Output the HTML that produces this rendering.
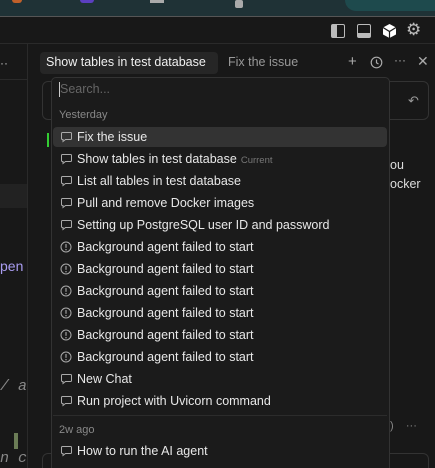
<!DOCTYPE html><html><head><style>
*{margin:0;padding:0;box-sizing:border-box}
html,body{width:435px;height:468px;overflow:hidden}
body{background:#181818;font-family:"Liberation Sans",sans-serif;position:relative;color:#ddd}
.abs{position:absolute}
.row{position:absolute;left:53px;width:334px;height:20px;font-size:12.5px;color:#e8e8e8;line-height:20px;padding-left:24px;white-space:nowrap}
.row svg{position:absolute;left:7px;top:4px}
.cur{font-size:9.5px;color:#777;margin-left:4px}
</style></head><body>
<div class="abs" style="left:0;top:0;width:435px;height:16px;background:#1f3236"></div>
<div class="abs" style="left:345px;top:0;width:90px;height:11px;background:#1e4a4d;border-radius:0 0 0 12px"></div>
<div class="abs" style="left:12px;top:0;width:10px;height:3px;background:#c0602a;border-radius:0 0 5px 5px"></div>
<div class="abs" style="left:80px;top:0;width:14px;height:3px;background:#5b3fc0;border-radius:0 0 6px 6px"></div>
<div class="abs" style="left:150px;top:0;width:14px;height:3px;background:#aaa"></div>
<div class="abs" style="left:235px;top:0;width:8px;height:8px;background:#aaa;border-radius:2px"></div>
<div class="abs" style="left:0;top:16px;width:435px;height:1px;background:#555"></div>
<div class="abs" style="left:0;top:17px;width:435px;height:27px;background:#181818;border-bottom:1px solid #2a2a2a"></div>
<svg class="abs" style="left:331px;top:24px" width="14" height="14"><rect x="0.5" y="0.5" width="13" height="13" rx="1.5" fill="none" stroke="#bbb"/><rect x="1" y="1" width="5" height="12" fill="#bbb"/></svg>
<svg class="abs" style="left:357px;top:24px" width="14" height="14"><rect x="0.5" y="0.5" width="13" height="13" rx="1.5" fill="none" stroke="#bbb"/><rect x="1" y="9" width="12" height="4" fill="#bbb"/></svg>
<svg class="abs" style="left:382px;top:23px" width="15" height="16"><path d="M7.5 1L14 4.5V11.5L7.5 15L1 11.5V4.5Z" fill="#fff"/><path d="M1 4.5L7.5 8.5L14 4.5M7.5 8.5V15" stroke="#181818" stroke-width="1.2" fill="none"/></svg>
<div class="abs" style="left:406px;top:20px;font-size:17px;color:#bbb">⚙</div>
<div class="abs" style="left:27px;top:44px;width:1px;height:424px;background:#2a2a2a"></div>
<div class="abs" style="left:0;top:56px;font-size:12px;color:#bbb">··</div>
<div class="abs" style="left:0;top:79px;width:27px;height:1px;background:#2a2a2a"></div>
<div class="abs" style="left:0;top:184px;width:27px;height:24px;background:#222"></div>
<div class="abs" style="left:0;top:258px;font-size:14px;color:#a99cf0">pen</div>
<div class="abs" style="left:0;top:378px;font-size:15px;color:#888;font-style:italic;font-family:'Liberation Mono'">/ a</div>
<div class="abs" style="left:14px;top:433px;width:4px;height:16px;background:#6b7c56"></div>
<div class="abs" style="left:0;top:450px;font-size:15px;color:#888;font-style:italic;font-family:'Liberation Mono'">n c</div>
<div class="abs" style="left:40px;top:52px;width:178px;height:22px;background:#262626;border-radius:4px"></div>
<div class="abs" style="left:46px;top:55px;font-size:12.5px;color:#f0f0f0">Show tables in test database</div>
<div class="abs" style="left:228px;top:55px;font-size:12.5px;color:#999">Fix the issue</div>
<div class="abs" style="left:348px;top:53px;font-size:15px;color:#aaa">+</div>
<svg class="abs" style="left:370px;top:56px" width="13" height="13"><circle cx="6.5" cy="6.5" r="5.3" fill="none" stroke="#aaa" stroke-width="1.2"/><path d="M6.5 3.5V6.8L8.5 8" stroke="#aaa" stroke-width="1.2" fill="none"/></svg>
<div class="abs" style="left:394px;top:53px;font-size:12px;color:#aaa">···</div>
<div class="abs" style="left:417px;top:53px;font-size:14px;color:#aaa">✕</div>
<div class="abs" style="left:42px;top:81px;width:387px;height:39px;border:1px solid #333;border-radius:6px"></div>
<div class="abs" style="left:408px;top:93px;font-size:13px;color:#999">↶</div>
<div class="abs" style="left:47px;top:133px;width:2px;height:14px;background:#3c3"></div>
<div class="abs" style="left:390px;top:158px;font-size:12.5px;color:#ddd">ou</div>
<div class="abs" style="left:390px;top:177px;font-size:12.5px;color:#ddd">ocker</div>
<div class="abs" style="left:390px;top:420px;font-size:11px;color:#888">)&nbsp;&nbsp;&nbsp;&nbsp;···</div>
<div class="abs" style="left:42px;top:453px;width:387px;height:30px;border:1px solid #333;border-radius:6px"></div>
<div class="abs" style="left:51px;top:77px;width:339px;height:400px;background:#1b1b1b;border:1px solid #333;border-radius:5px"></div>
<div class="abs" style="left:59px;top:82px;width:1px;height:15px;background:#ccc"></div>
<div class="abs" style="left:60px;top:82px;font-size:12.5px;color:#666">Search...</div>
<div class="abs" style="left:59px;top:109px;font-size:11px;color:#888">Yesterday</div>
<div class="abs" style="left:53px;top:127px;width:334px;height:20px;background:#333;border-radius:4px"></div>
<div id="rows"></div>
<div class="abs" style="left:53px;top:415px;width:334px;height:1px;background:#2c2c2c"></div>
<div class="abs" style="left:59px;top:424px;font-size:11px;color:#888">2w ago</div>
<script>
var c='<svg width="13" height="12"><path d="M2.5 1.5H10.5Q11.5 1.5 11.5 2.5V7.5Q11.5 8.5 10.5 8.5H5.5L3 10.5V8.5H2.5Q1.5 8.5 1.5 7.5V2.5Q1.5 1.5 2.5 1.5Z" fill="none" stroke="#aaa" stroke-width="1"/></svg>';
var w='<svg width="13" height="13"><circle cx="6" cy="6" r="5" fill="none" stroke="#aaa" stroke-width="1"/><path d="M6 3V6.8" stroke="#aaa" stroke-width="1.1"/><circle cx="6" cy="8.7" r="0.7" fill="#aaa"/></svg>';
var items=[[c,'Fix the issue'],[c,'Show tables in test database<span class="cur">Current</span>'],[c,'List all tables in test database'],[c,'Pull and remove Docker images'],[c,'Setting up PostgreSQL user ID and password'],[w,'Background agent failed to start'],[w,'Background agent failed to start'],[w,'Background agent failed to start'],[w,'Background agent failed to start'],[w,'Background agent failed to start'],[w,'Background agent failed to start'],[c,'New Chat'],[c,'Run project with Uvicorn command']];
var h='';items.forEach(function(it,i){h+='<div class="row" style="top:'+(127+22*i)+'px">'+it[0]+it[1]+'</div>';});
h+='<div class="row" style="top:441px">'+c+'How to run the AI agent</div>';
document.getElementById('rows').innerHTML=h;
</script>
</body></html>
